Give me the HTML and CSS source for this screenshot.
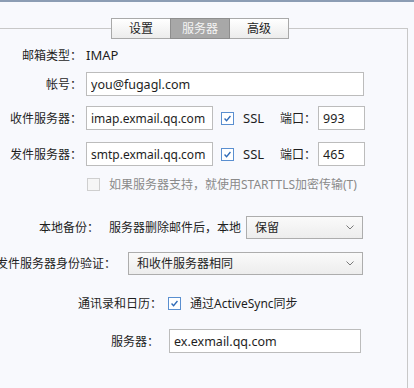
FILE: index.html
```html
<!DOCTYPE html>
<html lang="zh-CN">
<head>
    <meta charset="UTF-8">
    <meta name="viewport" content="width=device-width, initial-scale=1.0">
    <title>账户设置 - 服务器</title>
    <link rel="stylesheet" href="styles.css">
</head>
<body>
    <div class="group-box">
        <div class="tab-bar">
            <button class="tab">设置</button>
            <button class="tab active">服务器</button>
            <button class="tab">高级</button>
        </div>

        <div class="form">
            <div class="row row-type">
                <label class="label">邮箱类型：</label>
                <span class="value">IMAP</span>
            </div>

            <div class="row row-account">
                <label class="label">帐号：</label>
                <input class="text-input wide" type="text" value="you@fugagl.com">
            </div>

            <div class="row row-incoming">
                <label class="label">收件服务器：</label>
                <input class="text-input host" type="text" value="imap.exmail.qq.com">
                <span class="check checked"><svg viewBox="0 0 13 13"><path d="M3 6.5l2.4 2.6L10 3.6"/></svg></span>
                <span class="ssl">SSL</span>
                <span class="port-label">端口：</span>
                <input class="text-input port" type="text" value="993">
            </div>

            <div class="row row-outgoing">
                <label class="label">发件服务器：</label>
                <input class="text-input host" type="text" value="smtp.exmail.qq.com">
                <span class="check checked"><svg viewBox="0 0 13 13"><path d="M3 6.5l2.4 2.6L10 3.6"/></svg></span>
                <span class="ssl">SSL</span>
                <span class="port-label">端口：</span>
                <input class="text-input port" type="text" value="465">
            </div>

            <div class="row row-tls">
                <span class="label"></span>
                <span class="check disabled"></span>
                <span class="muted">如果服务器支持，就使用STARTTLS加密传输(T)</span>
            </div>

            <div class="row row-backup">
                <label class="label">本地备份：</label>
                <span class="hint">服务器删除邮件后，本地</span>
                <div class="select backup-select">
                    <span>保留</span>
                    <svg class="chevron" viewBox="0 0 8 5"><path d="M0.5 0.5L4 4l3.5-3.5"/></svg>
                </div>
            </div>

            <div class="row row-auth">
                <label class="label">发件服务器身份验证：</label>
                <div class="select auth-select">
                    <span>和收件服务器相同</span>
                    <svg class="chevron" viewBox="0 0 8 5"><path d="M0.5 0.5L4 4l3.5-3.5"/></svg>
                </div>
            </div>

            <div class="row row-sync">
                <label class="label">通讯录和日历：</label>
                <span class="check checked"><svg viewBox="0 0 13 13"><path d="M3 6.5l2.4 2.6L10 3.6"/></svg></span>
                <span class="sync-text">通过ActiveSync同步</span>
            </div>

            <div class="row row-server">
                <label class="label">服务器：</label>
                <input class="text-input server" type="text" value="ex.exmail.qq.com">
            </div>
        </div>
    </div>
</body>
</html>
```

FILE: styles.css
```css
* {
    margin: 0;
    padding: 0;
    box-sizing: border-box;
}

body {
    font-family: "Noto Sans", "Noto Sans CJK SC", sans-serif;
    font-size: 12px;
    color: #1e1e1e;
    background-color: #f8f9fd;
    border-top: 2px solid #8c9db4;
    height: 100vh;
    overflow: hidden;
}

/* 分组框, 左边框和下边框在画面外 */
.group-box {
    margin: 26px 6px 0 -10px;
    height: 361px;
    border: 1px solid #c8c8c8;
}

.tab-bar {
    display: flex;
    margin: -11px 0 0 120px;
}

.tab {
    width: 60px;
    height: 21px;
    border: 1px solid #a9a9a9;
    background: linear-gradient(#ffffff, #ececec);
    font-family: inherit;
    font-size: 12px;
    color: #1e1e1e;
    line-height: 19px;
}

.tab + .tab {
    margin-left: -1px;
}

.tab.active {
    background: #a8a8a8;
    border-color: #8e8e8e;
    color: #f4f4f4;
    position: relative;
}

.form {
    display: flex;
    flex-direction: column;
}

.row {
    display: flex;
    align-items: center;
    height: 24px;
}

.label {
    flex: none;
    width: 91px;
    text-align: right;
    white-space: nowrap;
    margin-right: 4px;
}

.row-type { margin-top: 4px; }
.row-account { margin-top: 5px; }
.row-incoming { margin-top: 10px; }
.row-outgoing { margin-top: 12px; }
.row-tls { margin-top: 6px; }
.row-backup { margin-top: 19px; }
.row-auth { margin-top: 12px; }
.row-sync { margin-top: 16px; }
.row-server { margin-top: 14px; }

.row-tls .label { width: 96px; margin-right: 0; }
.row-backup .label { width: 108px; margin-right: 10px; }
.row-auth .label { width: 125px; margin-right: 12px; }
.row-sync .label { width: 171px; margin-right: 6px; }
.row-server .label { width: 168px; margin-right: 10px; }

.value {
    font-size: 13px;
}

.text-input {
    height: 24px;
    border: 1px solid #bcbcbc;
    background: #ffffff;
    font-family: inherit;
    font-size: 12.5px;
    color: #1e1e1e;
    padding: 0 4px;
    outline: none;
}

.text-input.wide { width: 278px; }
.text-input.host { width: 127px; font-size: 12px; }
.text-input.port { width: 47px; }
.text-input.server { width: 192px; }

.check {
    flex: none;
    width: 13px;
    height: 13px;
    border: 1px solid #5a8fd0;
    background: #ffffff;
    display: flex;
}

.check svg {
    width: 11px;
    height: 11px;
    fill: none;
    stroke: #2f6bb8;
    stroke-width: 1.6;
}

.check.disabled {
    border-color: #cfcfcf;
    background: #f6f6f6;
}

.row-incoming .check,
.row-outgoing .check {
    margin-left: 8px;
}

.ssl {
    margin-left: 9px;
    font-size: 13px;
}

.port-label {
    margin-left: 16px;
    margin-right: 2px;
}

.muted {
    color: #8a8a8a;
    margin-left: 9px;
}

.sync-text {
    margin-left: 9px;
}

.select {
    height: 23px;
    border: 1px solid #adadad;
    background: linear-gradient(#fafafa, #ededed);
    display: flex;
    align-items: center;
    justify-content: space-between;
    padding: 0 8px 0 8px;
}

.backup-select { width: 117px; margin-left: 5px; }
.auth-select { width: 235px; }

.chevron {
    width: 8px;
    height: 5px;
    fill: none;
    stroke: #7a7a7a;
    stroke-width: 1;
}
```
